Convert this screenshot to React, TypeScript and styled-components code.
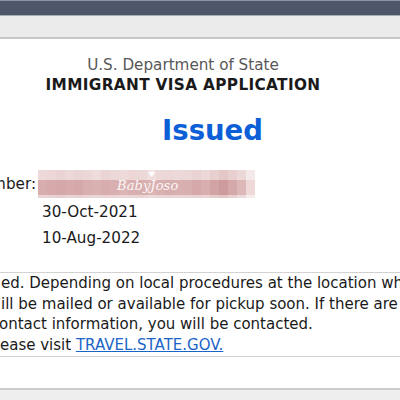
import React from "react";
import styled, { createGlobalStyle } from "styled-components";

const Global = createGlobalStyle`
  html, body { margin: 0; padding: 0; background: #ffffff; overflow: hidden; }
  body { font-family: "DejaVu Sans", Verdana, sans-serif; }
`;

const Page = styled.div`
  width: 400px;
  height: 400px;
  overflow: hidden;
  display: flex;
  flex-direction: column;
  background: #ffffff;
`;

const TopBar = styled.div`
  height: 14px;
  flex: none;
  background: #4d5769;
  border-top: 1px solid #8c95a3;
  border-bottom: 1px solid #a9afb8;
`;

const SubBar = styled.div`
  height: 21px;
  flex: none;
  background: #ebebeb;
  border-bottom: 2px solid #c6c6c6;
`;

const Content = styled.div`
  flex: 1;
  display: flex;
  flex-direction: column;
  padding-top: 16px;
`;

const Header = styled.div`
  width: 366px;
  text-align: center;
  display: flex;
  flex-direction: column;
`;

const Agency = styled.div`
  font-size: 15.2px;
  line-height: 20px;
  color: #575757;
`;

const AppTitle = styled.div`
  font-size: 15.3px;
  line-height: 20px;
  font-weight: bold;
  color: #1a1a1a;
  letter-spacing: 0.35px;
`;

const Status = styled.div`
  width: 425px;
  text-align: center;
  font-size: 27.5px;
  line-height: 36px;
  font-weight: bold;
  color: #0d5fd8;
  margin-top: 17px;
`;

const InfoRow = styled.div<{ $top?: number; $h?: number }>`
  display: flex;
  align-items: center;
  margin-top: ${(p) => p.$top ?? 0}px;
  height: ${(p) => p.$h ?? 26}px;
`;

const Label = styled.div`
  width: 36px;
  flex: none;
  overflow: hidden;
  white-space: nowrap;
  display: flex;
  justify-content: flex-end;
  font-size: 15.2px;
  color: #1a1a1a;
`;

const Value = styled.div`
  padding-left: 6px;
  font-size: 15.2px;
  color: #1a1a1a;
  white-space: nowrap;
`;

const Mosaic = styled.div`
  position: relative;
  margin-left: 2px;
  width: 217px;
  height: 28px;
  display: grid;
  grid-template-columns: repeat(24, 1fr);
  grid-template-rows: 10px 15px 3px;
`;

const Cell = styled.div<{ $c: string }>`
  background: ${(p) => p.$c};
`;

const Watermark = styled.div`
  position: absolute;
  left: 79px;
  top: 8px;
  font-family: "DejaVu Serif", serif;
  font-style: italic;
  font-size: 13px;
  color: rgba(255, 255, 255, 0.9);
  letter-spacing: 0.1px;
`;

const Heart = styled.div`
  position: absolute;
  left: 110px;
  top: 0px;
  font-size: 8px;
  color: rgba(255, 255, 255, 0.95);
`;

const Notice = styled.div`
  margin-top: 21px;
  border-top: 1px solid #d2d2d2;
  border-bottom: 1px solid #d2d2d2;
  padding: 0;
  display: flex;
  flex-direction: column;
`;

const Line = styled.div<{ $indent?: number }>`
  white-space: nowrap;
  font-size: 15px;
  line-height: 20.7px;
  color: #1a1a1a;
  text-indent: ${(p) => p.$indent ?? 0}px;
`;

const Link = styled.a`
  color: #1a64c8;
  text-decoration: underline;
`;

const Footer = styled.div`
  height: 10px;
  flex: none;
  margin-top: auto;
  background: #eeeeee;
  border-top: 2px solid #cccccc;
`;

const top = ["#eed9da", "#ecd6d6", "#ead3d4", "#edd8d8", "#ead4d5", "#ecd7d7", "#eedbdb", "#ead4d4", "#edd8d8", "#eedada", "#ecd6d6", "#edd8d8", "#f0dddd", "#edd8d8", "#ecd6d6", "#edd9d9", "#ecd7d7", "#e9d2d2", "#edd8d8", "#e8d0d0", "#e4c8c8", "#e8cfd0", "#edd8d8", "#f5eaea"];
const mid = ["#d8adae", "#d6aaab", "#d4a7a8", "#d7abac", "#d5a8a9", "#d8aeaf", "#d9b1b1", "#d7adad", "#d9b0b0", "#dbb4b4", "#d9b0b1", "#d8afaf", "#dbb5b5", "#d9b1b1", "#d7aeae", "#d9b0b0", "#d8afaf", "#d5a9a9", "#d8aeae", "#d2a3a3", "#cd9b9c", "#d5a8a9", "#dcb8b8", "#eed8d8"];
const bot = ["#ead4d4", "#e9d2d2", "#e7cfd0", "#e9d3d3", "#e8d1d1", "#ead4d4", "#ebd6d6", "#e9d3d3", "#ebd5d5", "#ecd8d8", "#ebd6d6", "#ead4d4", "#eddada", "#ebd6d6", "#e9d3d3", "#ebd5d5", "#ead4d4", "#e8d1d1", "#ead3d3", "#e6cdcd", "#e3c7c7", "#e8d0d0", "#eedcdc", "#f6eded"];

export default function App() {
  return (
    <>
      <Global />
      <Page>
        <TopBar />
        <SubBar />
        <Content>
          <Header>
            <Agency>U.S. Department of State</Agency>
            <AppTitle>IMMIGRANT VISA APPLICATION</AppTitle>
          </Header>
          <Status>Issued</Status>
          <InfoRow $top={21} $h={30}>
            <Label>Case Number:</Label>
            <Mosaic>
              {[...top, ...mid, ...bot].map((c, i) => (
                <Cell key={i} $c={c} />
              ))}
              <Heart>♥</Heart>
              <Watermark>BabyJoso</Watermark>
            </Mosaic>
          </InfoRow>
          <InfoRow $h={26}>
            <Label> </Label>
            <Value>30-Oct-2021</Value>
          </InfoRow>
          <InfoRow $h={26}>
            <Label> </Label>
            <Value>10-Aug-2022</Value>
          </InfoRow>
          <Notice>
            <Line $indent={1}>ed. Depending on local procedures at the location where you applied,</Line>
            <Line $indent={1}>ill be mailed or available for pickup soon. If there are problems</Line>
            <Line $indent={-1}>ontact information, you will be contacted.</Line>
            <Line $indent={0}>
              ease visit <Link href="#">TRAVEL.STATE.GOV.</Link>
            </Line>
          </Notice>
          <Footer />
        </Content>
      </Page>
    </>
  );
}
